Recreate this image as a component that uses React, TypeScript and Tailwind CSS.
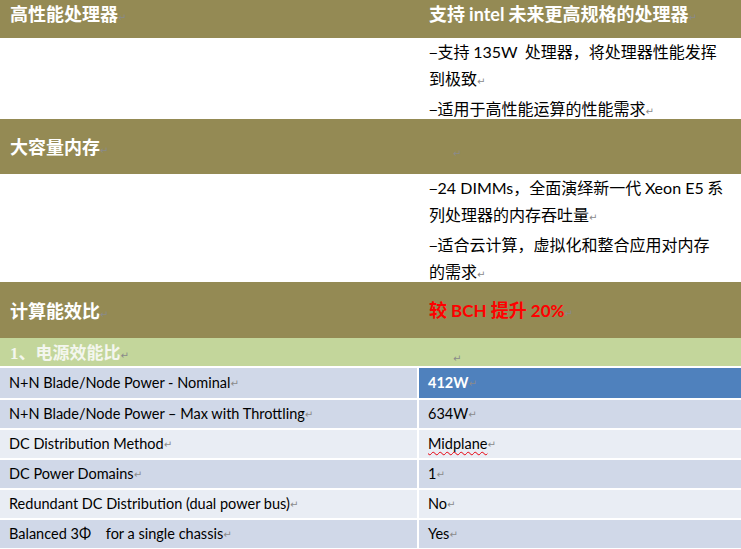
import React from "react";

const P = () => (
  <span className="text-[10px] text-[#8a8a8a] font-normal" style={{ fontFamily: "'DejaVu Sans', sans-serif" }}>↵</span>
);

const cjk = "'Noto Sans CJK SC', sans-serif";
const latin = "'Lato', 'Noto Sans CJK SC', sans-serif";

export default function App() {
  const rows: [string, React.ReactNode, boolean][] = [
    ["N+N Blade/Node Power - Nominal", "412W", true],
    ["N+N Blade/Node Power \u2013 Max with Throttling", "634W", false],
    ["DC Distribution Method", <span className="underline decoration-wavy decoration-red-600 decoration-1 underline-offset-2">Midplane</span>, false],
    ["DC Power Domains", "1", false],
    ["Redundant DC Distribution (dual power bus)", "No", false],
    ["Balanced 3\u03A6\u00A0\u00A0\u00A0 for a single chassis", "Yes", false],
  ];
  const bgs = ["bg-[#d0d8e8]", "bg-[#d0d8e8]", "bg-[#e9edf4]", "bg-[#d0d8e8]", "bg-[#e9edf4]", "bg-[#d0d8e8]"];
  return (
    <div className="w-[741px] h-[549px] bg-white overflow-hidden" style={{ fontFamily: cjk }}>
      {/* Row 1 */}
      <div className="grid grid-cols-[419px_1fr] h-[38px] bg-[#948a54] text-white font-bold text-[18px] leading-[27px]">
        <div className="pl-[10px]">高性能处理器<P /></div>
        <div className="pl-[10px]">支持 <span style={{ fontFamily: latin }}>intel</span> 未来更高规格的处理器<P /></div>
      </div>
      {/* Row 2 */}
      <div className="grid grid-cols-[419px_1fr] h-[81px] text-black text-[16px] leading-[27px]">
        <div />
        <div className="pl-[10px]">
          <div>–支持 <span style={{ fontFamily: latin }}>135W</span>&nbsp; 处理器，将处理器性能发挥</div>
          <div>到极致<P /></div>
          <div>–适用于高性能运算的性能需求<P /></div>
        </div>
      </div>
      {/* Row 3 */}
      <div className="grid grid-cols-[419px_1fr] h-[55px] bg-[#948a54] text-white font-bold text-[18px] items-center">
        <div className="pl-[10px]">大容量内存<P /></div>
        <div className="pl-[34px] pt-[6px]"><P /></div>
      </div>
      {/* Row 4 */}
      <div className="grid grid-cols-[419px_1fr] h-[108px] text-black text-[16px] leading-[27px]">
        <div />
        <div className="pl-[10px]">
          <div>–<span style={{ fontFamily: latin }}>24 DIMMs</span>，全面演绎新一代 <span style={{ fontFamily: latin }}>Xeon E5</span> 系</div>
          <div>列处理器的内存吞吐量<P /></div>
          <div>–适合云计算，虚拟化和整合应用对内存</div>
          <div>的需求<P /></div>
        </div>
      </div>
      {/* Row 5 */}
      <div className="grid grid-cols-[419px_1fr] h-[56px] bg-[#948a54] font-bold text-[18px] items-center">
        <div className="pl-[10px] text-white">计算能效比<P /></div>
        <div className="pl-[10px] text-[#ff0000]">较 <span className="text-[17px]" style={{ fontFamily: latin }}>BCH</span> 提升 <span className="text-[17px]" style={{ fontFamily: latin }}>20%</span><P /></div>
      </div>
      {/* Row 6 */}
      <div className="grid grid-cols-[419px_1fr] h-[28px] bg-[#c3d69b] font-bold text-[17px] items-center text-[#f4f6ee]">
        <div className="pl-[10px]"><span style={{ fontFamily: "'Liberation Serif', serif" }}>1</span>、电源效能比<P /></div>
        <div className="pl-[34px] pt-[4px]"><P /></div>
      </div>
      {/* Table */}
      <div className="flex flex-col gap-[2px] pt-[2px] bg-white text-[14.5px] text-black" style={{ fontFamily: latin }}>
        {rows.map(([l, r, hi], i) => (
          <div key={i} className={`grid grid-cols-[417px_1fr] gap-[2px] ${i === 0 ? "h-[30px]" : "h-[28px]"}`}>
            <div className={`flex items-center pl-[9px] ${bgs[i]}`}>{l}<P /></div>
            <div className={`flex items-center pl-[9px] ${hi ? "bg-[#4f81bd] text-white font-bold" : bgs[i]}`}>{r}<P /></div>
          </div>
        ))}
      </div>
    </div>
  );
}
